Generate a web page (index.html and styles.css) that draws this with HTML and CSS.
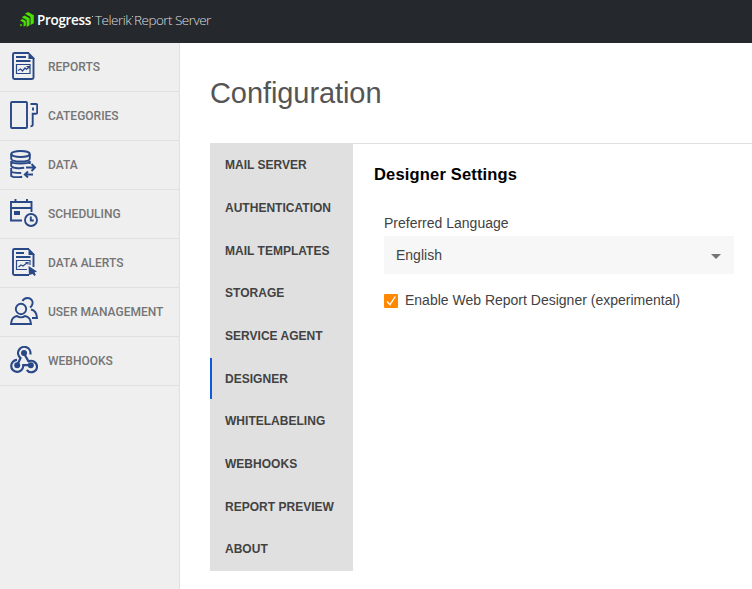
FILE: index.html
```html
<!DOCTYPE html>
<html lang="en">
<head>
<meta charset="utf-8">
<title>Configuration - Report Server</title>
<link rel="stylesheet" href="styles.css">
</head>
<body>
<header class="topbar">
  <svg class="logo" viewBox="0 0 14 16"><path d="M5 2.800 8 .9l5.800 3.300v8l-3.300 1.900V6zM1.700 6.200l3-1.800 4.900 2.900v6.900l-3 1.700V9zM.1 9.400l2.400-1.400 3.300 1.900v4.500l-2.200 1.300v-4.300zM.3 12.800l2.300 1.300-2.300 1.300z"/></svg>
  <span class="brand">Progress</span><i class="mark"></i>
  <span class="product telerik">Telerik</span><i class="mark"></i>
  <span class="product server">Report Server</span>
</header>
<div class="shell">
  <nav class="sidebar">
    <a class="nav-item"><svg viewBox="0 0 28 28"><path d="M19 1H4.500Q3 1 3 2.500v23Q3 27 4.500 27h17.500q1.500 0 1.500-1.500V6"/><path class="fill" d="M18.500 0 24.500 6v1h-6z"/><path d="M6 5h10M6 9h14.500"/><path class="thin" d="M6.500 12.500h13.500v9H6.500zM8 18.500l2.500-1.500 2 2 2.500-3 1.500 1.500 2.300-2.500M16.500 14.500h2.300v2"/></svg><span>REPORTS</span></a>
    <a class="nav-item"><svg viewBox="0 0 28 28"><rect x="1" y="1" width="16" height="26" rx="1"/><path d="M20.500 3H26q1.200 0 1.200 1.200v7.300q0 1.200-1.200 1.200h-3.300v11.100q0 1.500-2.200 1.500M23 6.500v3"/></svg><span>CATEGORIES</span></a>
    <a class="nav-item"><svg viewBox="0 0 28 28"><ellipse cx="10.500" cy="4" rx="9.300" ry="3"/><path d="M1.200 4v4.500c0 4 18.600 4 18.600 0V4M1.200 11v4.500c0 2.500 8 3.300 13 2.300M19.800 11v3M1.200 11c0 3.500 18.600 3.500 18.600 0M1.200 18v3c0 1.300 4 2 10 2M1.200 20v6c2 1.300 7 1.500 11 .7M16 17.500h9M21.500 14l3.500 3.500-3.500 3.500M23 24.500h-8M18 21.500l-3.200 3 3.200 3"/></svg><span>DATA</span></a>
    <a class="nav-item"><svg viewBox="0 0 28 28"><path d="M21.500 13V3H1v18.500h11M1 9h20.500M5.500 0v3M17 0v3"/><path class="fill" d="M4 12h6v4H4z"/><circle cx="21" cy="21" r="6"/><path d="M20.800 17.500v4h3"/></svg><span>SCHEDULING</span></a>
    <a class="nav-item"><svg viewBox="0 0 28 28"><path d="M19 1H4.500Q3 1 3 2.500v23Q3 27 4.500 27H19M23.500 6v13"/><path class="fill" d="M18.500 0 24.500 6v1h-6z"/><path d="M6 5h8M6 9h14.500"/><path class="thin" d="M20 17v-4.500H6.500v9H17M8.500 19l2.500-2 2 1 4.500-3.500M15.500 14.500H18v2"/><path class="fill" d="m18.500 18 8.500 5.500-2.500 1 1.300 2.300-1.400 1.200-1.700-2-3.700 1z"/></svg><span>DATA ALERTS</span></a>
    <a class="nav-item"><svg viewBox="0 0 28 28"><circle cx="11" cy="12" r="5.200"/><path d="M7 19c-3.500.5-5.700 3.500-6 8h20c-.3-4.500-2.500-7.500-6-8-2 1.800-6 1.800-8 0zM12.500 4C14.500.2 20 .1 22 3.500c1.300 2.300.4 5.500-2 7M21 12.500c4 .8 5.800 4 6 8.500h-5"/></svg><span>USER MANAGEMENT</span></a>
    <a class="nav-item"><svg viewBox="0 0 28 28"><path class="bold" d="M20.300 8.500A6.200 6.200 0 1 0 10.500 12l-3 6.500M7 13.900a6 6 0 1 0 6.200 6.600v-1.300h7M14 7.500l4.500 7.800c4-1.700 8.500 1 8.500 5.200 0 5.500-6.800 7.700-10.200 3.500"/><circle class="fill" cx="14" cy="7" r="3"/><circle class="fill" cx="7.200" cy="19.300" r="3"/><circle class="fill" cx="20.800" cy="19.300" r="3"/></svg><span>WEBHOOKS</span></a>
  </nav>
  <main class="content">
    <h1>Configuration</h1>
    <div class="tabstrip">
      <div class="tabs">
        <a class="tab">MAIL SERVER</a>
        <a class="tab">AUTHENTICATION</a>
        <a class="tab">MAIL TEMPLATES</a>
        <a class="tab">STORAGE</a>
        <a class="tab">SERVICE AGENT</a>
        <a class="tab active">DESIGNER</a>
        <a class="tab">WHITELABELING</a>
        <a class="tab">WEBHOOKS</a>
        <a class="tab">REPORT PREVIEW</a>
        <a class="tab">ABOUT</a>
      </div>
      <section class="panel">
        <h2>Designer Settings</h2>
        <div class="form">
          <div class="label">Preferred Language</div>
          <div class="dropdown"><span>English</span><i class="caret"></i></div>
          <div class="check-row"><svg class="checkbox" viewBox="0 0 14 14"><rect width="14" height="14" rx="1"/><path d="m3 7.500 3 3.200L11.300 2.500"/></svg><span>Enable Web Report Designer (experimental)</span></div>
        </div>
      </section>
    </div>
  </main>
</div>
</body>
</html>
```
FILE: styles.css
```css
* { box-sizing: border-box; }
body {
  margin: 0;
  height: 589px;
  overflow: hidden;
  display: flex;
  flex-direction: column;
  background: #fff;
  color: #424242;
  font-family: "Liberation Sans", Arial, sans-serif;
  font-size: 14px;
}
.topbar {
  flex: none;
  height: 43px;
  padding: 0 0 3px 20px;
  display: flex;
  align-items: center;
  background: #25282d;
  white-space: nowrap;
}
.logo { width: 14px; height: 16px; margin: -3px 3px 0 0; fill: #4be000; }
.brand, .product { font-family: "Open Sans", sans-serif; line-height: 20px; }
.brand { width: 55px; color: #fff; font-size: 13.500px; font-weight: 600; letter-spacing: -0.33px; }
.product { color: #dcdddf; font-size: 13.500px; font-weight: 300; }
.telerik { width: 37px; letter-spacing: -0.5px; }
.server { letter-spacing: -0.52px; }
.mark { width: 1px; height: 1px; margin: -7px 2px 0 0; background: #c5c6c8; }
.telerik + .mark { margin-right: 1px; }
.shell { flex: 1; display: flex; min-height: 0; }
.sidebar { flex: none; width: 180px; background: #efefef; border-right: 1px solid #e0e0e0; }
.nav-item {
  height: 49px;
  padding-left: 10px;
  display: flex;
  align-items: center;
  gap: 10px;
  border-bottom: 1px solid #e0e0e0;
  color: #757575;
  font: 500 12px Roboto, sans-serif;
  white-space: nowrap;
}
.nav-item svg { flex: none; width: 28px; height: 28px; margin-top: -2px; fill: none; stroke: #294887; stroke-width: 1.9; }
.nav-item .thin { stroke-width: 1.2; }
.nav-item .bold { stroke-width: 2.2; }
.nav-item .fill { fill: #294887; stroke: none; }
.content { flex: 1; min-width: 0; padding: 32px 0 0 30px; }
h1 { margin: 0 0 32px; height: 36px; line-height: 36px; font-size: 29px; font-weight: 400; letter-spacing: -.08px; color: #555; }
.tabstrip { display: flex; height: 428px; border-top: 1px solid #e0e0e0; }
.tabs { flex: none; width: 143px; display: grid; grid-template-rows: repeat(10, 42.660px); background: #e0e0e0; }
.tab { display: flex; align-items: center; padding-left: 15px; font-size: 12px; font-weight: 700; letter-spacing: .02px; white-space: nowrap; }
.tab.active { background: linear-gradient(#0d5be1, #0d5be1) left center / 2px 41px no-repeat; }
.panel { flex: 1; padding: 19px 18px 0 21px; }
h2 { margin: 0; line-height: 22px; font-size: 16.500px; color: #000; letter-spacing: .17px; }
.form { padding: 29px 0 0 10px; }
.label { height: 22px; line-height: 18px; }
.dropdown { height: 38px; padding: 0 13px 0 12px; display: flex; align-items: center; justify-content: space-between; background: #f7f7f7; }
.caret { border: 5px solid transparent; border-top-color: #757575; border-bottom: 0; margin-top: 3px; }
.check-row { display: flex; align-items: center; gap: 7px; margin-top: 18px; white-space: nowrap; }
.checkbox { width: 14px; height: 14px; margin-top: 2px; fill: #ff8800; }
.checkbox path { fill: none; stroke: #fff; stroke-width: 1.300; }
```
